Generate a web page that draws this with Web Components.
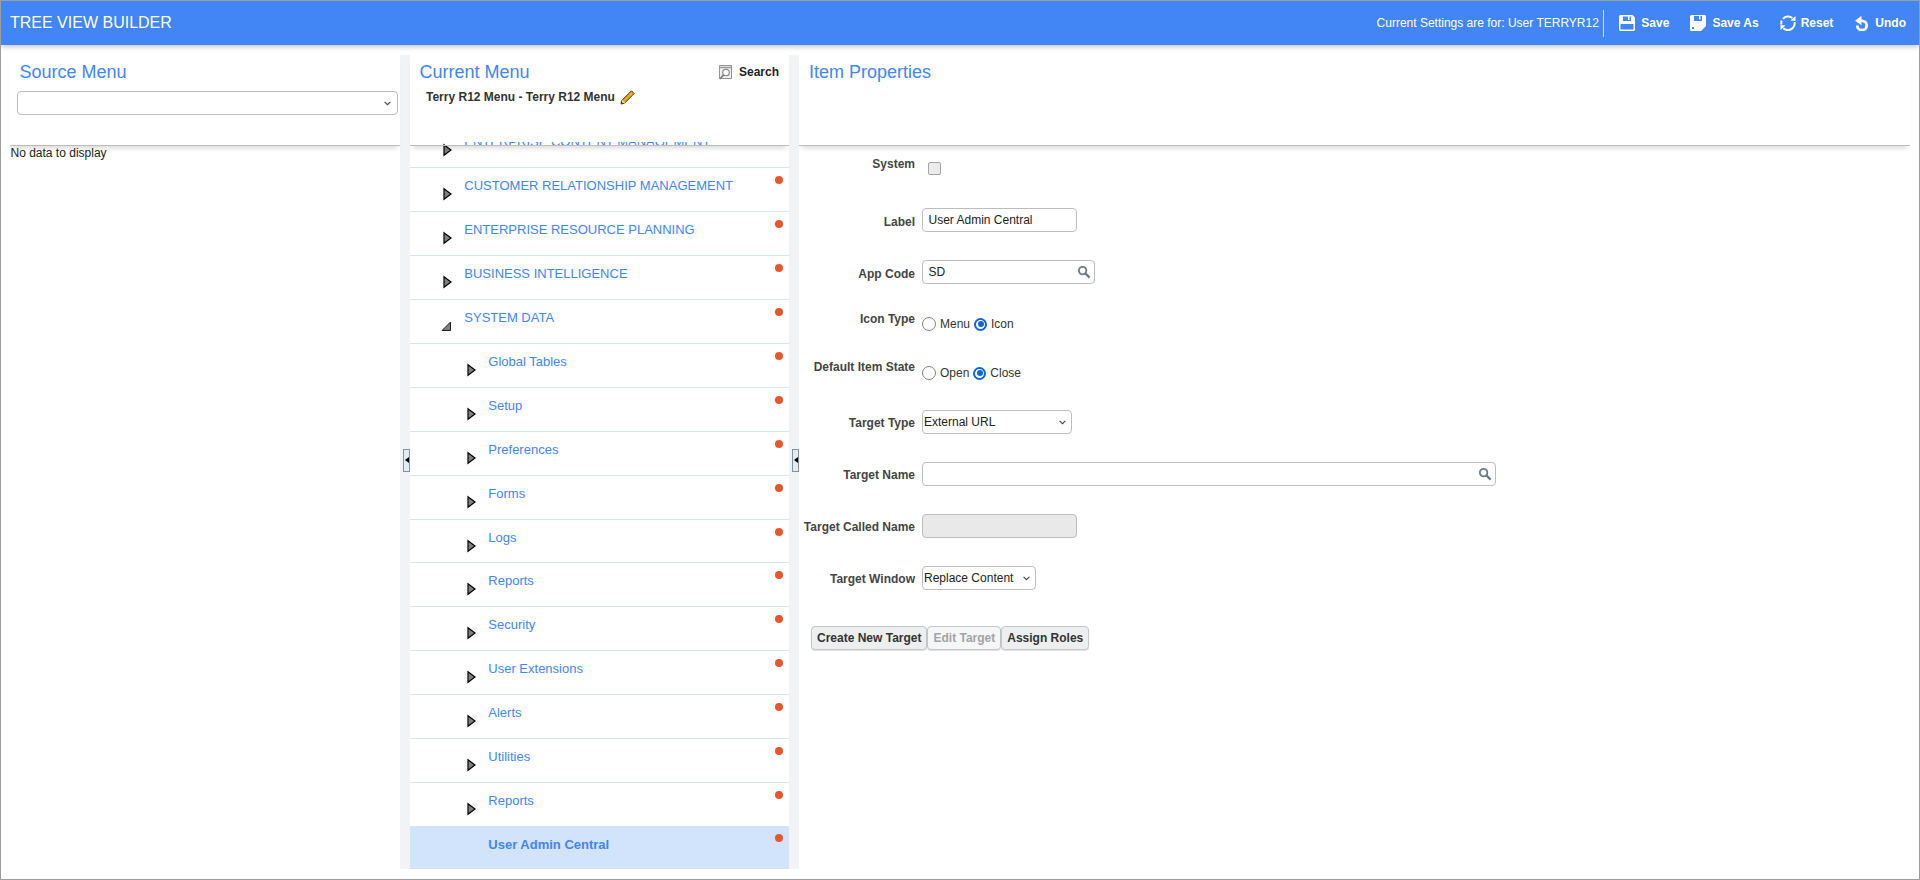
<!DOCTYPE html>
<html><head><meta charset="utf-8"><title>Tree View Builder</title>
<style>
html,body{margin:0;padding:0;height:100%;background:#fff}
body{font-family:"Liberation Sans",Arial,sans-serif;font-size:12px;color:#333}
</style></head><body>
<tv-app></tv-app>

<template id="t-app"><style>
:host{display:flex;flex-direction:column;box-sizing:border-box;width:1920px;height:880px;border:1px solid #9e9e9e;overflow:hidden;background:#fff}
.main{flex:1;display:flex;min-height:0;padding:10px 0 10px;position:relative}
</style>
<tv-header></tv-header>
<div class="main">
<tv-source></tv-source><tv-split></tv-split><tv-current></tv-current><tv-split></tv-split><tv-props></tv-props>
</div></template>

<template id="t-header"><style>
:host{display:flex;align-items:center;height:44px;flex:none;background:#4285f4;color:#fff;box-shadow:0 2px 5px rgba(0,0,0,.22);position:relative;z-index:3;padding:0 13px 0 9px}
.t{font-size:16px;flex:1}
.s{font-size:12px;padding-right:4.500px;height:27px;line-height:27px;border-right:1px solid #cfe0fb;margin-right:15px}
.b{display:flex;align-items:center;font-weight:bold;font-size:12px;gap:6px;margin-left:21px}
.s + .b{margin-left:0}
.tight{gap:5px}
svg{width:16px;height:16px;display:block}
</style>
<div class="t">TREE VIEW BUILDER</div>
<div class="s">Current Settings are for: User TERRYR12</div>
<div class="b"><svg viewBox="0 0 16 16"><path fill="#fff" fill-rule="evenodd" d="M1.500 0h12L16 2.500v12a1.500 1.500 0 0 1-1.500 1.500h-13A1.500 1.500 0 0 1 0 14.500v-13A1.500 1.500 0 0 1 1.500 0zM4 1.500V6h8V1.500h-1.500V5H9V1.500zM1.500 9v5.500h13V9z"/></svg>Save</div>
<div class="b"><svg viewBox="0 0 16 16"><path fill="#fff" fill-rule="evenodd" d="M1.500 0h13A1.500 1.500 0 0 1 16 1.500V11l-5 5H1.500A1.500 1.500 0 0 1 0 14.500v-13A1.500 1.500 0 0 1 1.500 0zM4 1v5h8V1h-1.500v3.500H9V1zM2 12v2h2v-2z"/></svg>Save As</div>
<div class="b tight"><svg viewBox="0 0 16 16" fill="none" stroke="#fff" stroke-width="2"><path d="M3 3.800A6.600 6.600 0 0 1 12.300 3M14.500 7a6.600 6.600 0 0 1-1.700 6 6.600 6.600 0 0 1-9.500.2M1.500 9.500a6.600 6.600 0 0 1 .2-4"/><path fill="#fff" stroke="none" d="M10.500 5.500L15.500 1v5zM5.500 10.500L.5 15v-5z"/></svg>Reset</div>
<div class="b tight" style="margin-left:21px"><svg viewBox="0 0 16 16" fill="none" stroke="#fff" stroke-width="2.800"><path d="M5 5.800H8a4.700 4.700 0 1 1-4.700 4.700"/><path fill="#fff" stroke="none" d="M1 5.800L7.500.8v9.500z"/></svg>Undo</div>
</template>

<template id="t-source"><style>
:host{display:flex;flex-direction:column;width:399px;flex:none;min-height:0}
.head{height:91px;margin-left:9px;box-sizing:border-box;padding-left:7px;background:#fff;border-bottom:1px solid #bdbdbd;box-shadow:0 5px 5px -3px rgba(0,0,0,.16);flex:none;position:relative;z-index:1}
h2{margin:0;font:18px/22px "Liberation Sans",Arial,sans-serif;color:#4285f4;padding:6px 0 0 2.500px}
tv-select{margin-top:8px}
.nd{padding:0 0 0 9.500px;line-height:14px;color:#222}
</style>
<div class="head"><h2>Source Menu</h2><tv-select style="width:380.500px"></tv-select></div>
<div class="nd">No data to display</div></template>

<template id="t-select"><style>
:host{display:flex;align-items:center;justify-content:space-between;box-sizing:border-box;height:24px;border:1px solid #bdbdbd;border-radius:4px;background:#fff;font-size:12px;color:#222;padding:0 5.500px 0 1px}
svg{width:7px;height:5px;display:block;flex:none}
</style><span><slot></slot></span><svg viewBox="0 0 7 5"><path d="M.6.8l2.900 2.900L6.400.8" fill="none" stroke="#444" stroke-width="1.100"/></svg></template>

<template id="t-split"><style>
:host{display:block;width:10px;flex:none;background:#f1f3f4;position:relative}
i{position:absolute;left:3px;top:394px;width:7px;height:22.500px;box-sizing:border-box;border:1px solid #7d93a8;background:#e8ebee;display:flex;align-items:center;justify-content:center}
i::before{content:"";border:3px solid transparent;border-left:0;border-right:4px solid #000}
</style><i></i></template>

<template id="t-current"><style>
:host{display:flex;flex-direction:column;width:379px;flex:none;min-height:0}
.head{height:91px;margin-bottom:-4px;box-sizing:border-box;background:linear-gradient(#fff,#fff) top/100% 87px no-repeat;border-bottom:1px solid #bdbdbd;box-shadow:0 5px 5px -3px rgba(0,0,0,.16);flex:none;position:relative;z-index:1;padding:6px 10px 0 9.500px}
.top{display:flex;align-items:center;justify-content:space-between;height:22px}
h2{margin:0;font:18px/22px "Liberation Sans",Arial,sans-serif;color:#4285f4}
.s{display:flex;align-items:center;gap:7px;font-weight:bold;color:#222}
.sub{display:flex;align-items:center;gap:5px;font-weight:bold;margin:6px 0 0 6.500px;color:#333;height:16px}
svg{display:block}
.tree{flex:1;min-height:0;overflow:hidden;display:flex;flex-direction:column;justify-content:flex-end}
</style>
<div class="head"><div class="top"><h2>Current Menu</h2><div class="s"><svg width="13" height="15" viewBox="0 0 13 15"><path d="M.5.500h12v13H.5z" fill="#efefef" stroke="#949494"/><path d="M1 2.500h11" stroke="#9a9a9a" stroke-width="1.500"/><circle cx="7" cy="7.500" r="3.300" fill="#fbfbfb" stroke="#808080" stroke-width="1.100"/><path d="M4.500 10L1 14" stroke="#7c7c7c" stroke-width="1.800"/></svg>Search</div></div>
<div class="sub">Terry R12 Menu - Terry R12 Menu <svg width="15" height="15" viewBox="0 0 15 15"><path d="M11.500.800l2.700 2.700L4.500 13.200 1 14l.8-3.500z" fill="#f2a21f" stroke="#4a2c08" stroke-width="1"/><path d="M2 10.500l2.500 2.500" stroke="#f7e0b5" stroke-width="1.300"/><path d="M10 3.500l2 2" stroke="#fbd67a" stroke-width="1"/></svg></div></div>
<div class="tree">
<tv-row lvl="1" state="closed">ENTERPRISE CONTENT MANAGEMENT</tv-row>
<tv-row lvl="1" state="closed">CUSTOMER RELATIONSHIP MANAGEMENT</tv-row>
<tv-row lvl="1" state="closed">ENTERPRISE RESOURCE PLANNING</tv-row>
<tv-row lvl="1" state="closed">BUSINESS INTELLIGENCE</tv-row>
<tv-row lvl="1" state="open">SYSTEM DATA</tv-row>
<tv-row lvl="2" state="closed">Global Tables</tv-row>
<tv-row lvl="2" state="closed">Setup</tv-row>
<tv-row lvl="2" state="closed">Preferences</tv-row>
<tv-row lvl="2" state="closed">Forms</tv-row>
<tv-row lvl="2" state="closed">Logs</tv-row>
<tv-row lvl="2" state="closed">Reports</tv-row>
<tv-row lvl="2" state="closed">Security</tv-row>
<tv-row lvl="2" state="closed">User Extensions</tv-row>
<tv-row lvl="2" state="closed">Alerts</tv-row>
<tv-row lvl="2" state="closed">Utilities</tv-row>
<tv-row lvl="2" state="closed">Reports</tv-row>
<tv-row lvl="2" state="leaf" sel>User Admin Central</tv-row>
</div></template>

<template id="t-row"><style>
:host{display:flex;flex:none;box-sizing:border-box;height:43.930px;border-top:1px solid #d6e4f7;font-size:13px;color:#4285f4;background:#fff}
:host([sel]){background:#d2e3fc;border-top:0;font-weight:bold;height:43px}
:host([sel]) .x{padding-top:11px}
:host([lvl="1"]) .in{padding-left:33px}
:host([lvl="2"]) .in{padding-left:57px}
.in{display:flex;flex:1;padding-right:6px;min-width:0}
.a{width:10px;height:12px;margin:20px 11.300px 0 0;flex:none;display:block;overflow:visible}
.x{line-height:16px;padding-top:10px;flex:1;white-space:nowrap}
.d{width:8px;height:8px;border-radius:50%;background:#e9552c;margin-top:8px;flex:none}
</style><div class="in"><svg class="a" viewBox="0 0 10 12"></svg><div class="x"><slot></slot></div><div class="d"></div></div></template>

<template id="t-props"><style>
:host{display:flex;flex-direction:column;flex:1;min-width:0;min-height:0}
.head{height:91px;margin-right:9px;box-sizing:border-box;background:#fff;border-bottom:1px solid #bdbdbd;box-shadow:0 5px 5px -3px rgba(0,0,0,.16);flex:none;padding:6px 0 0 10px;position:relative;z-index:1}
h2{margin:0;font:18px/22px "Liberation Sans",Arial,sans-serif;color:#4285f4}
.f{padding-top:10px}
.btns{display:flex;margin:0 0 0 12px}
input[type=text]{box-sizing:border-box;height:24px;border:1px solid #bdbdbd;border-radius:4px;font:12px "Liberation Sans",Arial,sans-serif;color:#222;padding:0 5.500px;display:block;margin:0;background:#fff;outline:none}
.w{position:relative;display:block}
.w svg{position:absolute;right:4px;top:5px;width:14px;height:14px}
.radios{display:flex;align-items:center;gap:4px;color:#333;height:14px}
.radios .r{width:14px;height:14px;box-sizing:border-box;border:1.500px solid #7f7f87;border-radius:50%;background:#fff;flex:none}
.radios .r.on{width:13px;height:13px;border:2px solid #0b66d8;background:#fff;position:relative}
.radios .r.on::after{content:"";position:absolute;inset:1.500px;border-radius:50%;background:#0b66d8}
.cb{width:13px;height:13px;box-sizing:border-box;border:1px solid #a3a3a3;border-radius:2px;background:#ececec;margin:6px 0 0 6px}
</style>
<div class="head"><h2>Item Properties</h2></div>
<div class="f">
<tv-field label="System" h="52" lp="1"><div class="cb"></div></tv-field>
<tv-field label="Label" h="52" lp="7"><input type="text" value="User Admin Central" style="width:155px"></tv-field>
<tv-field label="App Code" h="46" lp="7"><div class="w" style="width:173px"><input type="text" value="SD" style="width:173px"><svg viewBox="0 0 15 15"><circle cx="6" cy="6" r="4" fill="none" stroke="#6f7b85" stroke-width="2"/><path d="M9 9l4.500 4.500" stroke="#6f7b85" stroke-width="2.400"/></svg></div></tv-field>
<tv-field label="Icon Type" h="52" lp="6"><div class="radios" style="margin-top:11px"><div class="r"></div><span>Menu</span><div class="r on"></div><span>Icon</span></div></tv-field>
<tv-field label="Default Item State" h="52" lp="2"><div class="radios" style="margin-top:8px"><div class="r"></div><span>Open</span><div class="r on"></div><span>Close</span></div></tv-field>
<tv-field label="Target Type" h="52" lp="6"><tv-select style="width:150px">External URL</tv-select></tv-field>
<tv-field label="Target Name" h="52" lp="6"><div class="w" style="width:574px"><input type="text" style="width:574px"><svg viewBox="0 0 15 15"><circle cx="6" cy="6" r="4" fill="none" stroke="#6f7b85" stroke-width="2"/><path d="M9 9l4.500 4.500" stroke="#6f7b85" stroke-width="2.400"/></svg></div></tv-field>
<tv-field label="Target Called Name" h="52" lp="6"><input type="text" disabled style="width:155px;background:#e9e9e9"></tv-field>
<tv-field label="Target Window" h="60" lp="6"><tv-select style="width:114px">Replace Content</tv-select></tv-field>
<div class="btns"><tv-btn>Create New Target</tv-btn><tv-btn disabled>Edit Target</tv-btn><tv-btn>Assign Roles</tv-btn></div>
</div></template>

<template id="t-field"><style>
:host{display:flex;align-items:flex-start;gap:7px}
label{width:116px;flex:none;text-align:right;font-weight:bold;line-height:14px;color:#444;white-space:nowrap}
.c{flex:none}
</style><label></label><div class="c"><slot></slot></div></template>

<template id="t-btn"><style>
:host{display:inline-flex;align-items:center;box-sizing:border-box;height:24px;padding:0 5px;border:1px solid #c6c6c6;border-radius:4px;background:#eceef0;font-weight:bold;font-size:12px;color:#333;box-shadow:0 1px 1px rgba(0,0,0,.12)}
:host([disabled]){background:#f5f6f7;color:#a3a3a3}
</style><slot></slot></template>

<script>
function reg(name,tpl,init){
  customElements.define(name,class extends HTMLElement{
    constructor(){super();this.attachShadow({mode:"open"}).appendChild(document.getElementById(tpl).content.cloneNode(true));}
    connectedCallback(){if(init)init(this,this.shadowRoot);}
  });
}
reg("tv-header","t-header");reg("tv-source","t-source");reg("tv-select","t-select");reg("tv-split","t-split");
reg("tv-current","t-current");reg("tv-props","t-props");reg("tv-btn","t-btn");
reg("tv-row","t-row",(el,sr)=>{
  const s=el.getAttribute("state"),a=sr.querySelector(".a");
  if(s==="closed")a.innerHTML='<path d="M1 .8L8 6 1 11.200z" fill="#808080" stroke="#000" stroke-width="1.200"/>';
  if(s==="open")a.innerHTML='<path d="M7.500 2V10.500H-1z" fill="#808080" stroke="#222" stroke-width="1"/>';
  if(s==="leaf")a.style.visibility="hidden";
});
reg("tv-field","t-field",(el,sr)=>{
  const l=sr.querySelector("label");l.textContent=el.getAttribute("label");
  l.style.paddingTop=el.getAttribute("lp")+"px";
  el.style.height=el.getAttribute("h")+"px";
});
reg("tv-app","t-app");
</script>
</body></html>
